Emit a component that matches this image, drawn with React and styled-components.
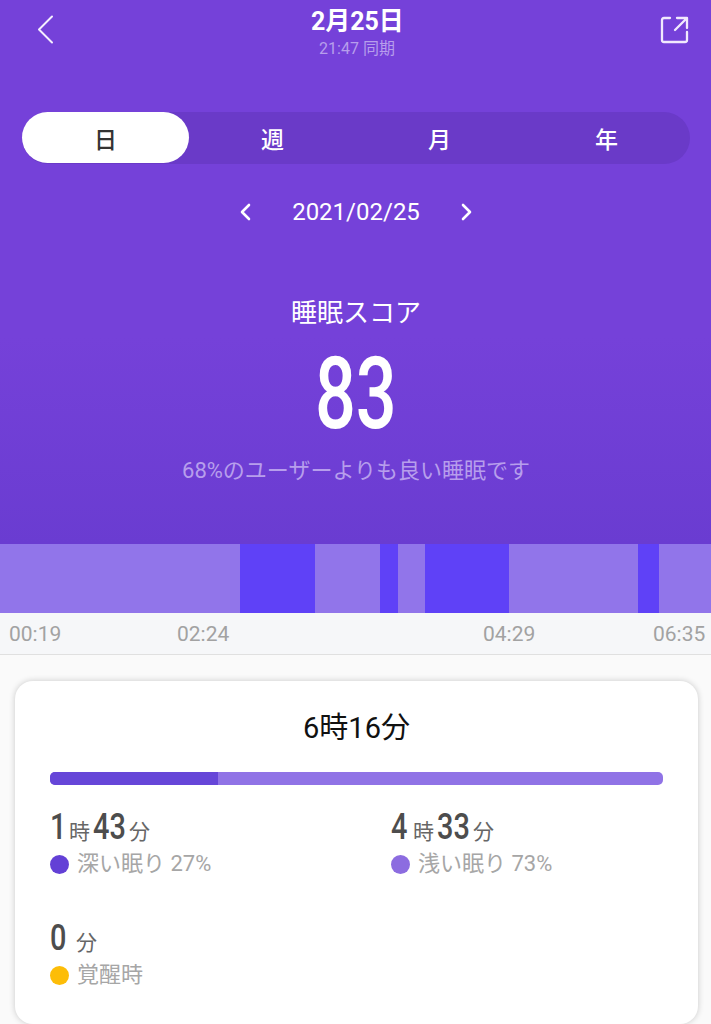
import styled, { createGlobalStyle } from 'styled-components'

const FONT = `Roboto, "Noto Sans CJK JP", sans-serif`

const tabs = ['日', '週', '月', '年']

const segments = [
  { width: 240, deep: false },
  { width: 75, deep: true },
  { width: 65, deep: false },
  { width: 18, deep: true },
  { width: 27, deep: false },
  { width: 84, deep: true },
  { width: 129, deep: false },
  { width: 21, deep: true },
  { width: 52, deep: false },
]

function App() {
  return (
    <Page>
      <GlobalStyle />
      <Hero>
        <Header>
          <IconButton aria-label="戻る">
            <svg width="20" height="32" viewBox="0 0 20 32" fill="none" stroke="#f4eefe" strokeWidth="2" strokeLinecap="round" strokeLinejoin="round">
              <path d="M16 2.5 L3 15.5 L16 28.5" />
            </svg>
          </IconButton>
          <HeaderText>
            <Title>2月25日</Title>
            <Synced>21:47 同期</Synced>
          </HeaderText>
          <IconButton aria-label="共有">
            <svg width="30" height="30" viewBox="0 0 30 30" fill="none" stroke="#f1e9fd" strokeWidth="2.3" strokeLinecap="round" strokeLinejoin="round">
              <path d="M11 4 H5 Q3 4 3 6 V26 Q3 28 5 28 H26 Q28 28 28 26 V18" />
              <path d="M28 4 L16 16 M18 4 H28 V14" />
            </svg>
          </IconButton>
        </Header>

        <TabBar>
          {tabs.map((tab, i) => <Tab key={tab} $active={i === 0}>{tab}</Tab>)}
        </TabBar>

        <DateNav>
          <svg width="11" height="18" viewBox="0 0 11 18" fill="none" stroke="#fff" strokeWidth="2.6" strokeLinecap="round" strokeLinejoin="round">
            <path d="M9 2 L2 9 L9 16" />
          </svg>
          <DateText>2021/02/25</DateText>
          <svg width="11" height="18" viewBox="0 0 11 18" fill="none" stroke="#fff" strokeWidth="2.6" strokeLinecap="round" strokeLinejoin="round">
            <path d="M2 2 L9 9 L2 16" />
          </svg>
        </DateNav>

        <ScoreLabel>睡眠スコア</ScoreLabel>
        <Score>83</Score>
        <ScoreNote>68%のユーザーよりも良い睡眠です</ScoreNote>
      </Hero>

      <Chart>
        {segments.map((s, i) => <Segment key={i} $width={s.width} $deep={s.deep} />)}
      </Chart>
      <TimeAxis>
        <span>00:19</span>
        <span>02:24</span>
        <span>04:29</span>
        <span>06:35</span>
      </TimeAxis>

      <Body>
        <Card>
          <Total>6時16分</Total>
          <Bar>
            <BarFill />
          </Bar>
          <Stats>
            <Stat>
              <Value>
                <Num $w={16}>1</Num><Unit>時</Unit><Num $w={33}>43</Num><Unit>分</Unit>
              </Value>
              <Legend><Dot $color="#6340d6" />深い眠り 27%</Legend>
            </Stat>
            <Stat>
              <Value>
                <Num $w={19}>4</Num><Unit>時</Unit><Num $w={33}>33</Num><Unit>分</Unit>
              </Value>
              <Legend><Dot $color="#8c6ce0" />浅い眠り 73%</Legend>
            </Stat>
            <Stat>
              <Value>
                <Num $w={18}>0</Num><Unit $gap={8}>分</Unit>
              </Value>
              <Legend><Dot $color="#fdbd08" />覚醒時</Legend>
            </Stat>
          </Stats>
        </Card>
      </Body>
    </Page>
  )
}

const GlobalStyle = createGlobalStyle`
  html, body {
    margin: 0;
    padding: 0;
    background: #fafafa;
  }
`

const Page = styled.div`
  width: 711px;
  height: 1024px;
  overflow: hidden;
  font-family: ${FONT};
  background: #fafafa;
`

const Hero = styled.div`
  height: 544px;
  box-sizing: border-box;
  padding: 6px 21px 0 22px;
  display: flex;
  flex-direction: column;
  align-items: center;
  color: #fff;
  background: linear-gradient(180deg, #7541d9 0%, #7541d9 62%, #6a3cd1 100%);
`

const Header = styled.div`
  width: 100%;
  height: 106px;
  padding: 0 1px 0 14px;
  box-sizing: border-box;
  display: flex;
  justify-content: space-between;
  align-items: flex-start;
`

const IconButton = styled.div`
  display: flex;
  padding-top: 8px;
`

const HeaderText = styled.div`
  display: flex;
  flex-direction: column;
  align-items: center;
  margin-left: -1px;
`

const Title = styled.div`
  font-size: 26px;
  line-height: 30px;
  font-weight: 700;
  transform: scaleX(0.96);
`

const Synced = styled.div`
  margin-top: 3px;
  font-size: 16px;
  line-height: 20px;
  color: #b79eec;
`

const TabBar = styled.div`
  width: 100%;
  height: 52px;
  flex-shrink: 0;
  display: grid;
  grid-template-columns: repeat(4, 1fr);
  border-radius: 26px;
  background: #6a3ac8;
`

const Tab = styled.div`
  display: flex;
  align-items: center;
  justify-content: center;
  height: 51px;
  border-radius: 26px;
  font-size: 23px;
  font-weight: 500;
  color: ${(p) => (p.$active ? '#333' : '#fff')};
  background: ${(p) => (p.$active ? '#fff' : 'transparent')};
`

const DateNav = styled.div`
  margin-top: 33px;
  height: 30px;
  display: flex;
  align-items: center;
  gap: 41px;
`

const DateText = styled.div`
  font-size: 24px;
  line-height: 30px;
`

const ScoreLabel = styled.div`
  margin-top: 68px;
  font-size: 26px;
  line-height: 36px;
`

const Score = styled.div`
  margin-top: 6px;
  font-size: 100px;
  line-height: 114px;
  font-weight: 500;
  transform: scaleX(0.72);
`

const ScoreNote = styled.div`
  margin-top: 5px;
  font-size: 22px;
  line-height: 30px;
  color: #b79eec;
`

const Chart = styled.div`
  height: 69px;
  display: flex;
`

const Segment = styled.div`
  width: ${(p) => p.$width}px;
  background: ${(p) => (p.$deep ? '#5f41f7' : '#9175ea')};
`

const TimeAxis = styled.div`
  height: 42px;
  box-sizing: border-box;
  padding-left: 9px;
  display: grid;
  grid-template-columns: 168px 306px 170px auto;
  align-items: center;
  font-size: 21px;
  color: #a2a2a2;
  background: #f6f7f9;
  border-bottom: 1px solid #e0e0e0;
`

const Body = styled.div`
  padding: 26px 13px 0 15px;
`

const Card = styled.div`
  height: 343px;
  box-sizing: border-box;
  padding: 28px 35px 0;
  background: #fff;
  border-radius: 18px;
  box-shadow: 0 0 6px rgba(0, 0, 0, 0.2);
`

const Total = styled.div`
  font-size: 29px;
  line-height: 38px;
  text-align: center;
  color: #111;
`

const Bar = styled.div`
  margin-top: 25px;
  height: 13px;
  border-radius: 5px;
  overflow: hidden;
  background: #9073e6;
`

const BarFill = styled.div`
  width: 168px;
  height: 100%;
  background: #6646d8;
`

const Stats = styled.div`
  margin-top: 22px;
  display: grid;
  grid-template-columns: 341px 1fr;
  row-gap: 39px;
`

const Stat = styled.div`
  display: flex;
  flex-direction: column;
`

const Value = styled.div`
  height: 40px;
  display: flex;
  align-items: baseline;
  color: #4d4d4d;
`

const Num = styled.span`
  display: inline-block;
  width: ${(p) => p.$w}px;
  font-size: 37px;
  line-height: 40px;
  font-weight: 500;
  white-space: nowrap;
  transform: scaleX(0.78);
  transform-origin: left center;
`

const Unit = styled.span`
  margin: 0 3px 0 ${(p) => p.$gap || 3}px;
  font-size: 21px;
  color: #666;
`

const Legend = styled.div`
  margin-top: 2px;
  display: flex;
  align-items: center;
  gap: 8px;
  font-size: 22px;
  line-height: 30px;
  color: #a6a6a6;
  white-space: nowrap;
`

const Dot = styled.span`
  width: 19px;
  height: 19px;
  border-radius: 50%;
  background: ${(p) => p.$color};
`

export default App
